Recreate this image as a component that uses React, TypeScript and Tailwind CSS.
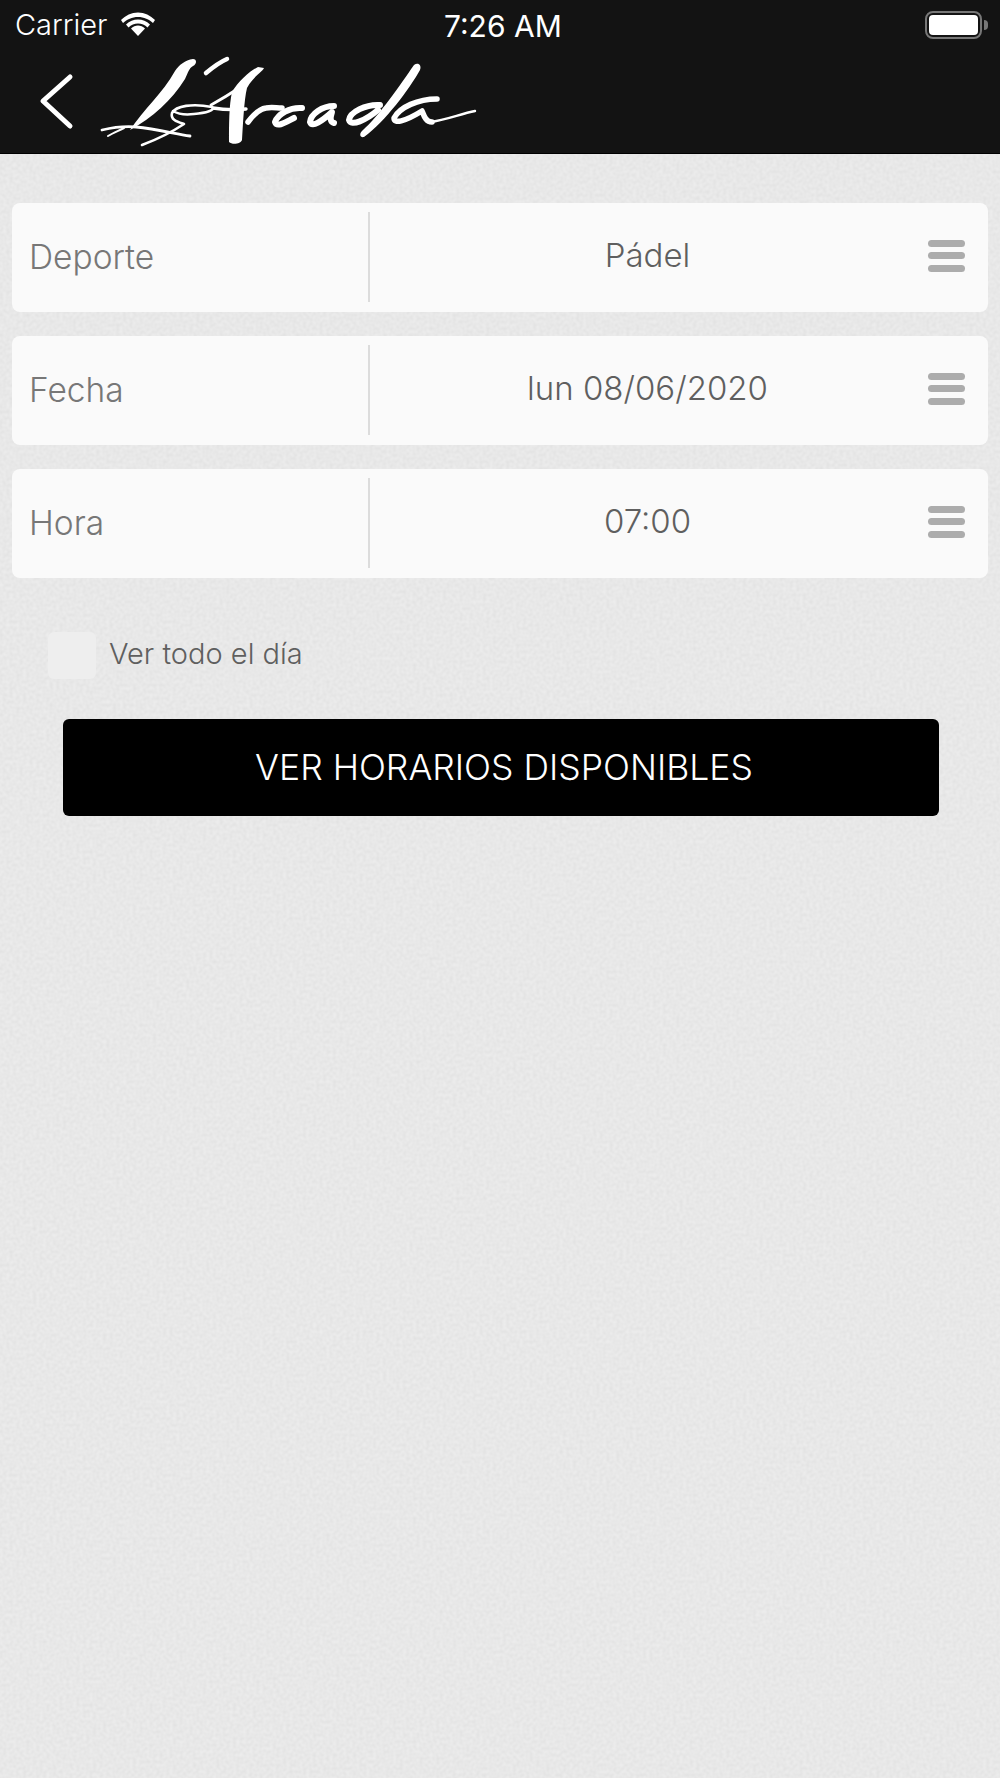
import React from 'react';

// thin brush strokes of the script logo, in page pixels
const LOGO_STROKES: [string, number][] = [
  ['M102 130 C115 127 125 126 136 127 C155 129 172 133 190 136', 2.8],
  ['M108 136 C113 133 118 131 124 128', 2],
  ['M142 145 C158 139 172 132 184 124 C178 122 170 120 172 113 C176 106 192 103 212 107 C216 110 206 113 194 114 C186 115 178 114 173 111', 2.6],
  ['M206 73 C212 68 220 62 227 59', 4.5],
  ['M239 88 C230 94 220 100 211 105', 2.8],
  ['M213 108 C225 110 236 110 246 109', 3.4],
  ['M248 122 C254 114 259 109 266 108 C272 107 276 108 282 108', 5.5],
  ['M302 108 C290 107 278 114 275 122 C277 128 286 122 294 118', 6],
  ['M334 106 C322 106 311 114 310 122 C312 128 322 121 332 112 C330 118 330 122 334 123', 6],
  ['M380 105 C366 104 350 112 349 120 C351 127 366 120 378 110', 6],
  ['M437 99 C418 99 400 107 394 118 C394 124 404 122 422 111 C424 116 426 122 432 122', 5.5],
  ['M430 122 C446 120 460 114 475 111', 2.4],
];

// tapered main strokes: L, A and d
const LOGO_SHAPES = [
  'M193 59 C197 59 197 64 193 66 C189 68 188 73 185 79 C172 100 152 118 130 130 C143 110 163 93 175 71 C179 65 185 60 193 59 Z',
  'M258 67 L264 68 C262 72 252 78 247 88 C244 100 243 125 242 140 C241 144 232 145 229 142 C229 125 229 105 232 92 C238 82 248 72 258 67 Z',
  'M414 65 C418 62 422 65 420 70 C410 88 385 122 364 137 C360 138 359 134 362 131 C380 115 400 85 414 65 Z',
];

const Logo = () => (
  <svg viewBox="100 55 380 95" className="w-[380px] h-[95px]" fill="none" stroke="#ffffff" strokeLinecap="round" strokeLinejoin="round">
    {LOGO_SHAPES.map((d, i) => (
      <path key={i} d={d} fill="#ffffff" stroke="none" />
    ))}
    {LOGO_STROKES.map(([d, w], i) => (
      <path key={i} d={d} strokeWidth={w} />
    ))}
  </svg>
);

const SelectRow = ({ label, value }: { label: string; value: string }) => (
  <div className="relative flex items-center h-[108.5px] rounded-[8px] bg-[#fafafa]">
    <div className="w-[356px] shrink-0 pl-[17px] text-[33.5px] font-light text-[#777777]">{label}</div>
    <div className="w-[2px] h-[90px] bg-[#dcdcdc]" />
    <div className="flex-1 flex items-center pb-[3px]">
      <div className="flex-1 text-center text-[33px] font-light text-[#5f5f5f] pr-[3px]">{value}</div>
    </div>
    <div className="w-[37px] mr-[23px] mb-[3px] flex flex-col gap-[5.5px]">
      <div className="h-[7px] rounded-full bg-[#acacac]" />
      <div className="h-[7px] rounded-full bg-[#acacac]" />
      <div className="h-[7px] rounded-full bg-[#acacac]" />
    </div>
  </div>
);

export default function App() {
  return (
    <div className="w-[1000px] h-[1778px] bg-[#e6e6e6] font-['Inter',sans-serif] overflow-hidden">
      <header className="h-[154px] bg-[#131313] border-b border-black">
        <div className="relative flex items-center justify-between h-[50px] pl-[15px] pr-[12px] text-white">
          <div className="flex items-center gap-[14px]">
            <span className="text-[29px] font-light">Carrier</span>
            <svg viewBox="0 0 34 24" className="w-[34px] h-[24px] mb-[2px]" fill="#ffffff">
              <path d="M17 5 C23 5 28 7.500 32 11 L34 8 C29.500 3.500 23.500 0.500 17 0.500 C10.500 0.500 4.500 3.500 0 8 L2 11 C6 7.500 11 5 17 5 Z" />
              <path d="M17 11.500 C20.500 11.500 24 13 26.500 15.500 L29 12.500 C25.500 9.200 21.500 7.500 17 7.500 C12.500 7.500 8.500 9.200 5 12.500 L7.500 15.500 C10 13 13.500 11.500 17 11.500 Z" />
              <path d="M17 13.500 C14.500 13.500 12 14.500 10 16.500 L17 24 L24 16.500 C22 14.500 19.500 13.500 17 13.500 Z" />
            </svg>
          </div>
          <span className="absolute left-[444px] top-[4px] text-[30px]">7:26 AM</span>
          <div className="flex items-center gap-[2px]">
            <div className="w-[57px] h-[28px] rounded-[8px] border-[2px] border-[#777777] p-[2px]">
              <div className="w-full h-full rounded-[4px] bg-white" />
            </div>
            <div className="w-[4px] h-[10px] rounded-r-full bg-[#777777]" />
          </div>
        </div>
        <div className="relative h-[103px]">
          <svg viewBox="0 0 40 60" className="absolute left-[36px] top-[22px] w-[40px] h-[60px]" fill="none" stroke="#ffffff" strokeWidth="5" strokeLinecap="round" strokeLinejoin="round">
            <path d="M34 5 L7 29 L34 54" />
          </svg>
          <div className="absolute left-[100px] top-[5px] blur-[0.4px]">
            <Logo />
          </div>
        </div>
      </header>

      <main className="relative pt-[49px]">
        {/* paper grain behind the form */}
        <svg className="absolute inset-0 w-full h-[1624px]" aria-hidden="true">
          <filter id="grain" x="0" y="0" width="100%" height="100%">
            <feTurbulence type="fractalNoise" baseFrequency="0.3" numOctaves="1" seed="4" />
            <feColorMatrix type="matrix" values="0.5 0 0 0 0.6  0.5 0 0 0 0.6  0.5 0 0 0 0.6  0 0 0 0 0.25" />
          </filter>
          <rect width="100%" height="100%" filter="url(#grain)" />
        </svg>

        <div className="relative flex flex-col gap-[24.5px] px-[12px]">
          <SelectRow label="Deporte" value="Pádel" />
          <SelectRow label="Fecha" value="lun 08/06/2020" />
          <SelectRow label="Hora" value="07:00" />
        </div>

        <div className="relative flex items-center gap-[13px] mt-[54px] pl-[48px]">
          <div className="w-[48px] h-[47px] rounded-[6px] bg-[#eeeeee]" />
          <span className="mb-[4px] text-[29px] font-light text-[#5f5f5f]">Ver todo el día</span>
        </div>

        <button className="relative block ml-[63px] mt-[40px] w-[876px] h-[97px] rounded-[6px] bg-black text-white text-[35.5px] font-light text-center pl-[6px]">
          VER HORARIOS DISPONIBLES
        </button>
      </main>
    </div>
  );
}
